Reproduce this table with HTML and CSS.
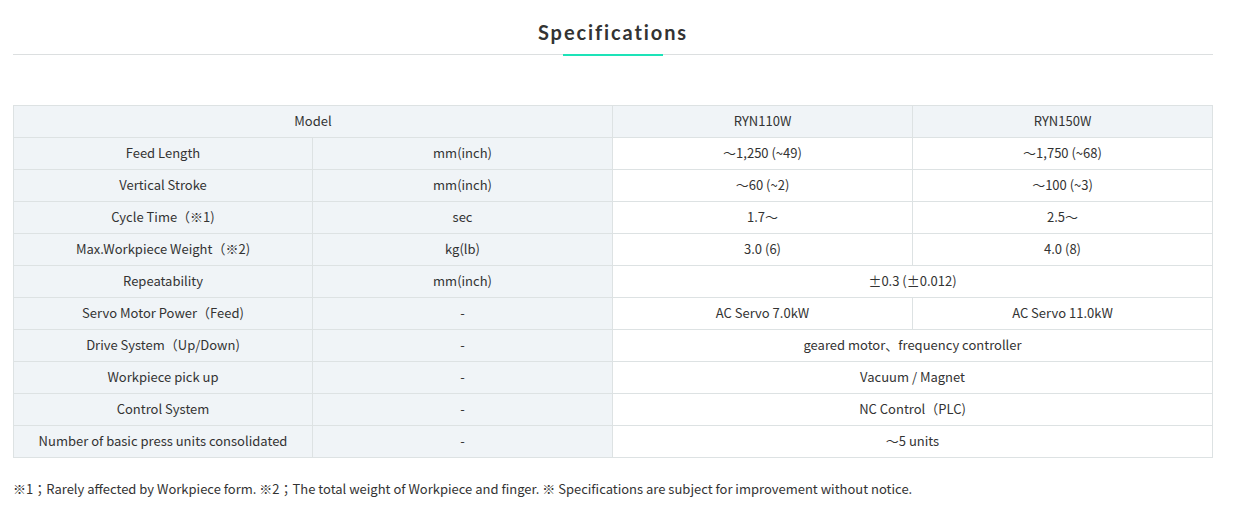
FILE: index.html
```html
<!DOCTYPE html>
<html>
<head>
<meta charset="utf-8">
<link rel="stylesheet" href="styles.css">
</head>
<body>
<div class="wrap">
  <div class="heading">
    <h2 class="title">Specifications</h2>
  </div>
  <table class="spec">
    <colgroup><col class="c1"><col class="c"><col class="c"><col class="c4"></colgroup>
    <tr class="head"><td colspan="2" class="lab">Model</td><td>RYN110W</td><td>RYN150W</td></tr>
    <tr><td class="lab">Feed Length</td><td class="lab">mm(inch)</td><td>～1,250 (~49)</td><td>～1,750 (~68)</td></tr>
    <tr><td class="lab">Vertical Stroke</td><td class="lab">mm(inch)</td><td>～60 (~2)</td><td>～100 (~3)</td></tr>
    <tr><td class="lab">Cycle Time（※1)</td><td class="lab">sec</td><td>1.7～</td><td>2.5～</td></tr>
    <tr><td class="lab">Max.Workpiece Weight（※2)</td><td class="lab">kg(lb)</td><td>3.0 (6)</td><td>4.0 (8)</td></tr>
    <tr><td class="lab">Repeatability</td><td class="lab">mm(inch)</td><td colspan="2">±0.3 (±0.012)</td></tr>
    <tr><td class="lab">Servo Motor Power（Feed)</td><td class="lab">-</td><td>AC Servo 7.0kW</td><td>AC Servo 11.0kW</td></tr>
    <tr><td class="lab">Drive System（Up/Down)</td><td class="lab">-</td><td colspan="2">geared motor、frequency controller</td></tr>
    <tr><td class="lab">Workpiece pick up</td><td class="lab">-</td><td colspan="2">Vacuum / Magnet</td></tr>
    <tr><td class="lab">Control System</td><td class="lab">-</td><td colspan="2">NC Control（PLC)</td></tr>
    <tr><td class="lab">Number of basic press units consolidated</td><td class="lab">-</td><td colspan="2">～5 units</td></tr>
  </table>
  <p class="note">※1；Rarely affected by Workpiece form. ※2；The total weight of Workpiece and finger. ※ Specifications are subject for improvement without notice.</p>
</div>
</body>
</html>
```

FILE: styles.css
```css
html, body {
  margin: 0;
  padding: 0;
  background: #fff;
}
body {
  font-family: "Noto Sans CJK JP", "Noto Sans", sans-serif;
  color: #333;
}
.wrap {
  width: 1200px;
  margin: 0 0 0 13px;
}
.heading {
  border-bottom: 1px solid #dcdfe0;
  height: 54px;
  display: flex;
  justify-content: center;
}
.title {
  margin: 0;
  height: 54px;
  box-sizing: border-box;
  padding-top: 18px;
  font-family: Lato, sans-serif;
  font-weight: 700;
  font-size: 20px;
  line-height: 28px;
  letter-spacing: 1.9px;
  color: #333;
  position: relative;
}
.title::after {
  content: "";
  position: absolute;
  left: 50%;
  margin-left: -50px;
  width: 100px;
  height: 2px;
  bottom: -2px;
  background: #1de3b8;
}
.spec {
  margin-top: 50px;
  width: 1199px;
  border-collapse: collapse;
  table-layout: fixed;
  font-size: 13px;
}
.spec .c1 { width: 299px; }
.spec .c { width: 300px; }
.spec .c4 { width: 300px; }
.spec td {
  border: 1px solid #dde2e3;
  height: 29px;
  padding: 0 0 2px 0;
  text-align: center;
  vertical-align: middle;
  line-height: 19px;
  color: #333;
}
.spec .lab { background: #f0f4f7; }
.spec .head td { background: #f0f4f7; }
.note {
  margin: 21px 0 0 0;
  font-size: 13px;
  line-height: 19px;
  color: #333;
}
```
